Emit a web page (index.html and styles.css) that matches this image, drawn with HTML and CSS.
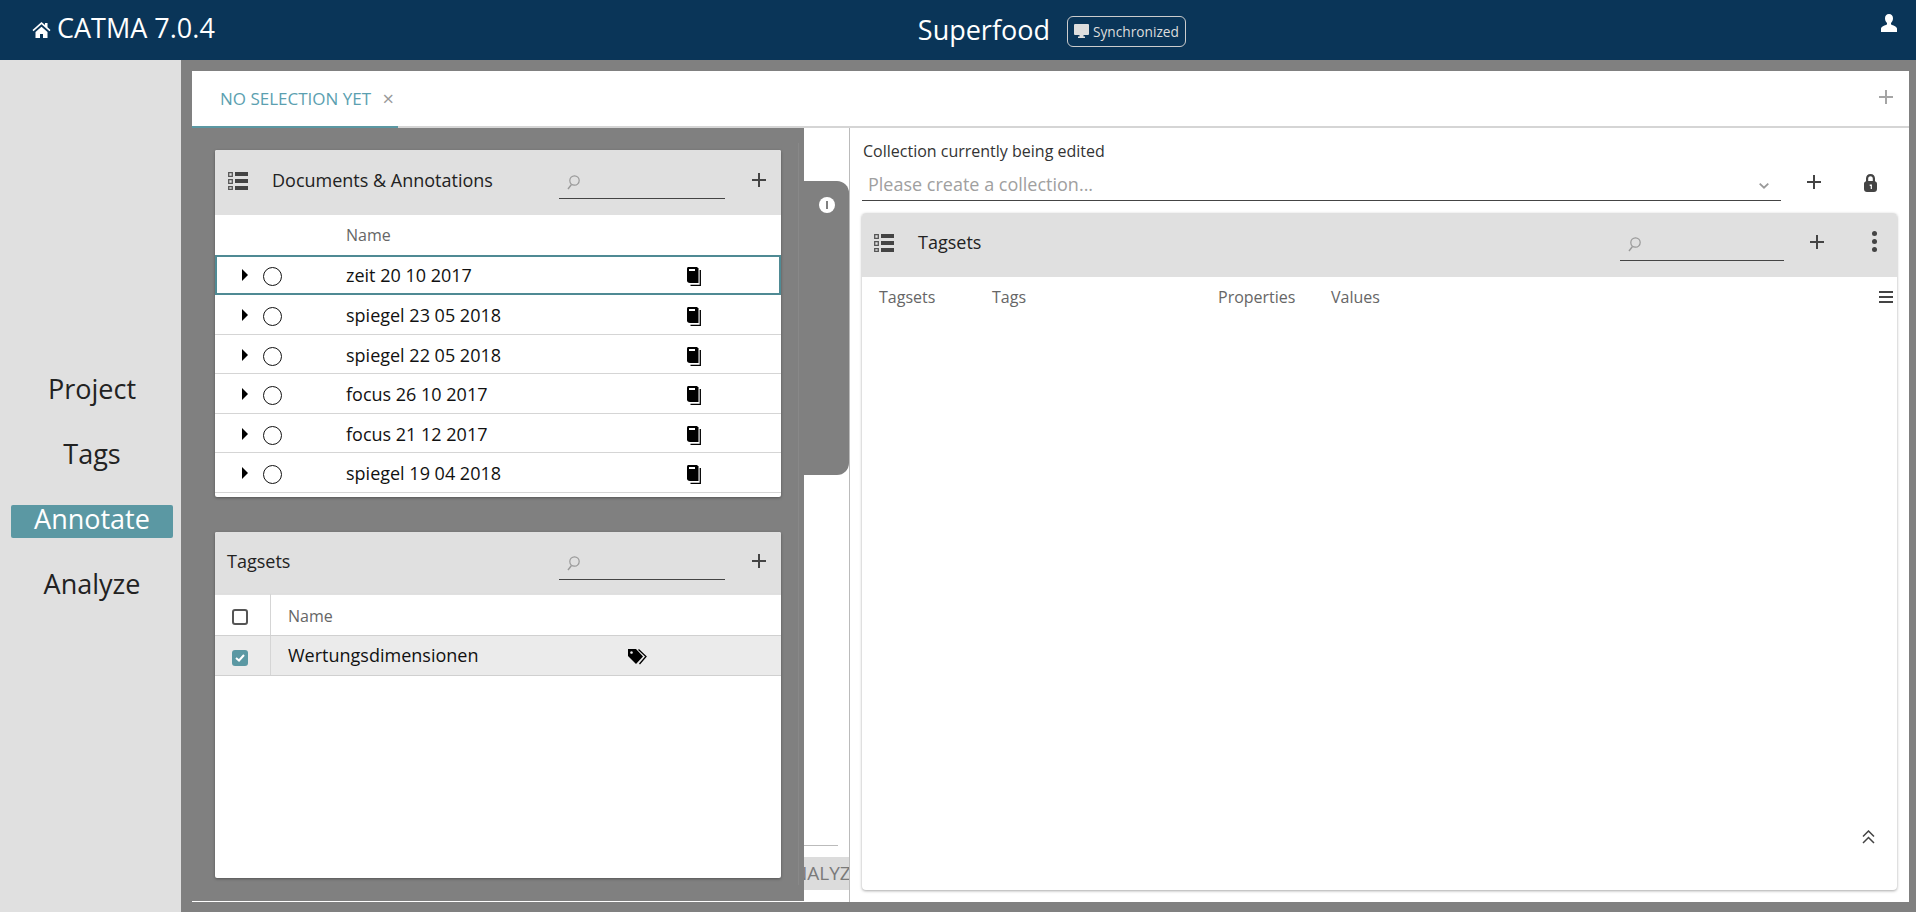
FILE: index.html
```html
<!DOCTYPE html>
<html lang="en">
  <head>
    <meta charset="UTF-8" />
    <title>CATMA 7.0.4</title>
    <link rel="stylesheet" href="styles.css">
  </head>
  <body>
    <svg class="defs" width="0" height="0">
      <symbol id="i-list" viewBox="0 0 20 18">
        <path fill="#444" d="M7 0h13v4H7zM7 7h13v4H7zM7 14h13v4H7z"/>
        <path fill="none" stroke="#555" stroke-width="1.3" d="M.7.7h3.6v3.6H.7zM.7 7.7h3.6v3.6H.7zM.7 14.7h3.6v2.600H.7z"/>
      </symbol>
      <symbol id="i-search" viewBox="0 0 13 15">
        <circle cx="7.500" cy="5.500" r="4.700" fill="none" stroke="#999" stroke-width="1.200"/>
        <path d="M4.500 9.500 1 14" fill="none" stroke="#999" stroke-width="1.400"/>
      </symbol>
      <symbol id="i-plus" viewBox="0 0 14 14">
        <path d="M7 0v14M0 7h14" fill="none" stroke="currentColor" stroke-width="2"/>
      </symbol>
      <symbol id="i-doc" viewBox="0 0 14 19">
        <path fill="#000" d="M1.500 0H10l1.500 1.500V16H3c-2 0-3-1-3-2.500v-12C0 .6.600 0 1.500 0z"/>
        <path fill="#fff" d="M2 2h6v2H2z"/>
        <path fill="none" stroke="#000" stroke-width="1.300" d="M13.300 3v15.300H3.500"/>
      </symbol>
    </svg>

    <header class="topbar">
      <a class="brand">
        <svg class="home-icon" viewBox="0 0 18 16"><path fill="#fff" d="M9 0 0 8l1 1.200L9 2.300l8 6.900L18 8l-3-2.700V1h-2.500v2.100zM3 10v6h4.500v-4h3v4H15v-6L9 4.800z"/></svg>
        CATMA 7.0.4
      </a>
      <div class="project-info">
        <span class="project-name">Superfood</span>
        <span class="sync-badge">
          <svg class="sync-icon" viewBox="0 0 15 14"><path fill="#ddd" d="M1 0h13a1 1 0 0 1 1 1v9a1 1 0 0 1-1 1H9.500v1.500H11V14H4v-1.500h1.500V11H1a1 1 0 0 1-1-1V1a1 1 0 0 1 1-1z"/></svg>
          Synchronized
        </span>
      </div>
      <svg class="user-icon" viewBox="0 0 16 18"><path fill="#fff" d="M8 0c2.500 0 4 1.800 4 4.300 0 2-.8 3.800-2 4.700v1.500c2 .8 5.500 1.800 6 4V18H0v-3.500c.5-2.200 4-3.200 6-4V9C4.800 8.100 4 6.300 4 4.300 4 1.800 5.500 0 8 0z"/></svg>
    </header>

    <div class="app">
      <nav class="sidebar">
        <a class="nav-item">Project</a>
        <a class="nav-item">Tags</a>
        <a class="nav-item active">Annotate</a>
        <a class="nav-item">Analyze</a>
      </nav>

      <main class="main">
        <div class="tabsheet">
          <div class="tabbar">
            <div class="tab">NO SELECTION YET <span class="tab-close">×</span></div>
            <svg class="tab-add"><use href="#i-plus"/></svg>
          </div>

          <div class="workspace">
            <section class="left-pane">
              <div class="drawer">
                <div class="card docs-card">
                  <div class="card-head">
                    <svg class="list-icon"><use href="#i-list"/></svg>
                    <span class="card-title">Documents &amp; Annotations</span>
                    <div class="search"><svg class="search-icon"><use href="#i-search"/></svg></div>
                    <svg class="plus"><use href="#i-plus"/></svg>
                  </div>
                  <div class="grid-head docs-head">Name</div>
                  <div class="doc-row selected"><i class="arrow"></i><i class="radio"></i><span class="doc-name">zeit 20 10 2017</span><svg class="doc-icon"><use href="#i-doc"/></svg></div>
                  <div class="doc-row"><i class="arrow"></i><i class="radio"></i><span class="doc-name">spiegel 23 05 2018</span><svg class="doc-icon"><use href="#i-doc"/></svg></div>
                  <div class="doc-row"><i class="arrow"></i><i class="radio"></i><span class="doc-name">spiegel 22 05 2018</span><svg class="doc-icon"><use href="#i-doc"/></svg></div>
                  <div class="doc-row"><i class="arrow"></i><i class="radio"></i><span class="doc-name">focus 26 10 2017</span><svg class="doc-icon"><use href="#i-doc"/></svg></div>
                  <div class="doc-row"><i class="arrow"></i><i class="radio"></i><span class="doc-name">focus 21 12 2017</span><svg class="doc-icon"><use href="#i-doc"/></svg></div>
                  <div class="doc-row"><i class="arrow"></i><i class="radio"></i><span class="doc-name">spiegel 19 04 2018</span><svg class="doc-icon"><use href="#i-doc"/></svg></div>
                </div>

                <div class="card tagsets-card">
                  <div class="card-head">
                    <span class="card-title plain">Tagsets</span>
                    <div class="search"><svg class="search-icon"><use href="#i-search"/></svg></div>
                    <svg class="plus"><use href="#i-plus"/></svg>
                  </div>
                  <div class="tagset-head">
                    <div class="check-cell"><i class="checkbox"></i></div>
                    <div class="tagset-label">Name</div>
                  </div>
                  <div class="tagset-row">
                    <div class="check-cell">
                      <i class="checkbox checked"><svg viewBox="0 0 10 8"><path d="M1 4l3 2.500L9 1" fill="none" stroke="#fff" stroke-width="2"/></svg></i>
                    </div>
                    <div class="tagset-name">Wertungsdimensionen</div>
                    <svg class="tag-icon" viewBox="0 0 19 16"><path fill="#000" d="M0 0h8l7 7.500L8 15 0 7zM3.500 2.200a1.300 1.300 0 1 0 .01 0z" fill-rule="evenodd"/><path fill="none" stroke="#000" stroke-width="1.300" d="M10.500.5l7.500 7-6.500 7.500"/></svg>
                  </div>
                </div>
              </div>

              <div class="drawer-side">
                <div class="handle">
                  <svg class="info-icon" viewBox="0 0 16 16"><circle cx="8" cy="8" r="8" fill="#fff"/><path d="M8 4v8" stroke="#808080" stroke-width="2"/></svg>
                </div>
                <div class="side-rule"></div>
                <div class="side-tab"><span>ANALYZE</span></div>
              </div>
            </section>

            <section class="right-pane">
              <label class="collection-label">Collection currently being edited</label>
              <div class="collection-row">
                <div class="collection-select">
                  <span>Please create a collection...</span>
                  <svg class="chevron" viewBox="0 0 10 6"><path d="M.7.7 5 4.700 9.300.7" fill="none" stroke="#999" stroke-width="1.800"/></svg>
                </div>
                <svg class="plus"><use href="#i-plus"/></svg>
                <svg class="lock-icon" viewBox="0 0 13 18"><path fill="#444" fill-rule="evenodd" d="M6.500 0C9.300 0 11 2 11 4.500V7.300c1.300.4 2 1.400 2 2.700v5c0 1.800-1.200 3-3 3H3c-1.800 0-3-1.200-3-3v-5c0-1.300.7-2.300 2-2.700V4.500C2 2 3.700 0 6.500 0zm0 2.200C5 2.200 4.200 3.200 4.200 4.700V7h4.600V4.700c0-1.500-.8-2.500-2.300-2.500zM5.700 10.500V12h1v3h1.200v-4.500z"/></svg>
              </div>

              <div class="card tags-card">
                <div class="card-head tall">
                  <svg class="list-icon"><use href="#i-list"/></svg>
                  <span class="card-title">Tagsets</span>
                  <div class="search"><svg class="search-icon"><use href="#i-search"/></svg></div>
                  <svg class="plus"><use href="#i-plus"/></svg>
                  <div class="dots"><i></i><i></i><i></i></div>
                </div>
                <div class="tree-head">
                  <span class="col-tagsets">Tagsets</span>
                  <span class="col-tags">Tags</span>
                  <span class="col-props">Properties</span>
                  <span class="col-values">Values</span>
                  <div class="menu-lines"><i></i><i></i><i></i></div>
                </div>
                <svg class="collapse-icon" viewBox="0 0 13 14"><path d="M1 6.500 6.500 1 12 6.500M1 13 6.500 7.500 12 13" fill="none" stroke="#444" stroke-width="1.500"/></svg>
              </div>
            </section>
          </div>
        </div>
      </main>
    </div>
  </body>
</html>
```

FILE: styles.css
```css
* {
  margin: 0;
  padding: 0;
  box-sizing: border-box;
  font-family: "Open Sans", sans-serif;
}
body {
  height: 912px;
  overflow: hidden;
  background-color: #808080;
  color: #222;
}
.defs {
  position: absolute;
}
i {
  display: block;
}

.topbar {
  height: 60px;
  background-color: #0a3558;
  color: #fff;
  display: flex;
  align-items: center;
  position: relative;
  padding-left: 32px;
}
.brand {
  display: flex;
  align-items: center;
  gap: 6px;
  font-size: 27px;
  margin-top: -5px;
}
.home-icon {
  width: 19px;
  height: 16px;
  margin-top: 5px;
}
.project-info {
  display: flex;
  align-items: center;
  gap: 17px;
  margin-left: 703px;
}
.project-name {
  font-size: 27px;
  margin-top: -2px;
}
.sync-badge {
  display: flex;
  align-items: center;
  gap: 4px;
  height: 31px;
  padding: 0 6px;
  border: 1px solid #ccc;
  border-radius: 6px;
  font-size: 13.7px;
  color: #ddd;
  margin-top: 2px;
}
.sync-icon {
  width: 15px;
  height: 14px;
}
.user-icon {
  position: absolute;
  right: 19px;
  top: 14px;
  width: 16px;
  height: 18px;
}

.app {
  display: flex;
  height: 852px;
}
.sidebar {
  width: 181px;
  background-color: #e0e0e0;
  display: flex;
  flex-direction: column;
  justify-content: center;
  gap: 32px;
  padding: 6px 8px 0 11px;
}
.nav-item {
  height: 33px;
  line-height: 28px;
  text-align: center;
  font-size: 27px;
  border-radius: 2px;
}
.nav-item.active {
  background-color: #5b98a3;
  color: #fff;
}

.main {
  flex: 1;
  padding: 11px 7px 10px 11px;
}
.tabsheet {
  height: 831px;
  background-color: #fff;
  display: flex;
  flex-direction: column;
}
.tabbar {
  height: 57px;
  flex-shrink: 0;
  display: flex;
  justify-content: space-between;
  border-bottom: 2px solid #d5d5d5;
}
.tab {
  width: 206px;
  height: 57px;
  padding: 16px 0 0 28px;
  border-bottom: 2px solid #5b98a3;
  color: #5b9fb0;
  font-size: 17px;
  white-space: nowrap;
}
.tab-close {
  color: #999;
  font-size: 20px;
  line-height: 18px;
  margin-left: 7px;
  vertical-align: -1px;
}
.tab-add {
  width: 14px;
  height: 14px;
  margin: 19px 16px 0 0;
  color: #a5a5a5;
}

.workspace {
  flex: 1;
  display: flex;
  min-height: 0;
}
.left-pane {
  width: 658px;
  display: flex;
  border-right: 1px solid #bbb;
}
.drawer {
  width: 612px;
  background-color: #808080;
  padding: 22px 23px 0;
  margin-bottom: 1px;
  position: relative;
}
.drawer::after {
  content: "";
  position: absolute;
  right: 5px;
  top: 15px;
  bottom: 16px;
  width: 1px;
  background-color: #888;
}
.drawer-side {
  flex: 1;
  display: flex;
  flex-direction: column;
  overflow: hidden;
}
.handle {
  height: 294px;
  margin-top: 53px;
  background-color: #808080;
  border-radius: 0 12px 12px 0;
  padding: 16px 0 0 15px;
}
.info-icon {
  display: block;
  width: 16px;
  height: 16px;
}
.side-rule {
  margin-top: auto;
  width: 34px;
  height: 1px;
  background-color: #bbb;
}
.side-tab {
  height: 33px;
  margin: 11px 0 12px;
  background-color: #dcdcdc;
  color: #7a7a7a;
  font-size: 19px;
  line-height: 33px;
  white-space: nowrap;
  overflow: hidden;
}
.side-tab span {
  display: block;
  margin-left: -23px;
}

.card {
  background-color: #fff;
  border-radius: 2px;
  overflow: hidden;
  box-shadow: 0 1px 3px rgba(0, 0, 0, 0.35);
}
.docs-card {
  height: 347px;
  margin-bottom: 35px;
}
.tagsets-card {
  height: 346px;
}
.tagsets-card .card-head {
  height: 63px;
}
.card-head {
  height: 65px;
  background-color: #e0e0e0;
  display: flex;
  align-items: center;
  padding: 0 15px 0 13px;
}
.list-icon {
  width: 20px;
  height: 18px;
  margin: -3px 24px 0 0;
  flex-shrink: 0;
}
.card-title {
  flex: 1;
  font-size: 18px;
  color: #222;
  margin-top: -5px;
}
.card-title.plain {
  margin: -5px 0 0 -1px;
}
.search {
  width: 166px;
  height: 33px;
  border-bottom: 1px solid #444;
  padding: 9px 0 0 8px;
  margin-top: -1px;
}
.search-icon {
  display: block;
  width: 13px;
  height: 15px;
}
.plus {
  width: 14px;
  height: 14px;
  margin: -5px 0 0 27px;
  color: #444;
  flex-shrink: 0;
}

.grid-head {
  height: 40px;
  font-size: 16px;
  color: #666;
}
.docs-head {
  padding: 9px 0 0 131px;
}
.doc-row {
  height: 39.5px;
  display: flex;
  align-items: center;
  border-bottom: 1px solid #d5d5d5;
  padding: 3px 0 0 27px;
}
.doc-row.selected {
  height: 40px;
  border: 2px solid #4f8a94;
  padding: 0 0 0 25px;
}
.arrow {
  width: 0;
  height: 0;
  border-left: 6px solid #000;
  border-top: 6px solid transparent;
  border-bottom: 6px solid transparent;
  margin-top: -1px;
}
.radio {
  width: 19px;
  height: 19px;
  border: 1.5px solid #111;
  border-radius: 50%;
  margin-left: 15px;
  margin-top: 2px;
}
.doc-name {
  width: 341px;
  margin-left: 64px;
  font-size: 18px;
  color: #111;
  margin-top: -1px;
}
.doc-icon {
  width: 14px;
  height: 19px;
  margin-top: 2px;
}

.tagset-head,
.tagset-row {
  display: flex;
  height: 40px;
  border-bottom: 1px solid #d0d0d0;
}
.tagset-head {
  height: 42px;
  margin-top: -1px;
  box-shadow: 0 1px 2px rgba(0, 0, 0, 0.15);
}
.tagset-row {
  background-color: #ebebeb;
}
.check-cell {
  width: 56px;
  padding: 15px 0 0 17px;
  border-right: 1px solid #d5d5d5;
}
.tagset-row .check-cell {
  padding-top: 14px;
}
.checkbox {
  width: 16px;
  height: 16px;
  border: 2px solid #555;
  border-radius: 3px;
}
.checkbox.checked {
  border: none;
  background-color: #5b98a3;
  padding: 4px 3px;
}
.checkbox svg {
  display: block;
  width: 10px;
  height: 8px;
}
.tagset-label {
  padding: 11px 0 0 17px;
  font-size: 16px;
  color: #666;
}
.tagset-name {
  width: 340px;
  padding: 7px 0 0 17px;
  font-size: 18px;
  color: #111;
}
.tag-icon {
  width: 19px;
  height: 16px;
  margin-top: 13px;
  margin-left: 17px;
}

.right-pane {
  flex: 1;
  display: flex;
  flex-direction: column;
  padding: 13px 12px 12px 12px;
}
.collection-label {
  font-size: 16px;
  color: #333;
  line-height: 20px;
  padding-left: 1px;
}
.collection-row {
  display: flex;
  align-items: center;
  height: 34px;
  margin: 6px 0 12px;
}
.collection-select {
  width: 919px;
  height: 34px;
  border-bottom: 1px solid #444;
  display: flex;
  justify-content: space-between;
  align-items: center;
  padding: 0 12px 0 6px;
  font-size: 18px;
  color: #a0a0a0;
}
.chevron {
  width: 10px;
  height: 6px;
  margin-top: 4px;
}
.collection-row .plus {
  margin: -4px 0 0 26px;
}
.lock-icon {
  width: 13px;
  height: 18px;
  margin: -2px 0 0 43px;
}
.tags-card {
  flex: 1;
  position: relative;
  border-radius: 4px;
}
.card-head.tall {
  height: 64px;
  padding: 0 16px 0 12px;
}
.tall .card-title {
  margin-top: -7px;
}
.tall .list-icon {
  margin-top: -5px;
}
.tall .plus {
  margin: -7px 0 0 26px;
}
.tall .search {
  width: 164px;
  margin-top: -2px;
}
.dots {
  display: flex;
  flex-direction: column;
  gap: 3px;
  margin: -7px 4px 0 48px;
}
.dots i {
  width: 5px;
  height: 5px;
  border-radius: 50%;
  background-color: #444;
}
.tree-head {
  position: relative;
  height: 40px;
  display: flex;
  align-items: center;
  font-size: 16px;
  color: #666;
}
.col-tagsets {
  width: 130px;
  padding-left: 17px;
}
.col-tags {
  width: 226px;
}
.col-props {
  width: 113px;
}
.menu-lines {
  position: absolute;
  right: 4px;
  top: 14px;
  display: flex;
  flex-direction: column;
  gap: 3px;
}
.menu-lines i {
  width: 14px;
  height: 2px;
  background-color: #444;
}
.collapse-icon {
  position: absolute;
  right: 22px;
  bottom: 46px;
  width: 13px;
  height: 14px;
}
```
